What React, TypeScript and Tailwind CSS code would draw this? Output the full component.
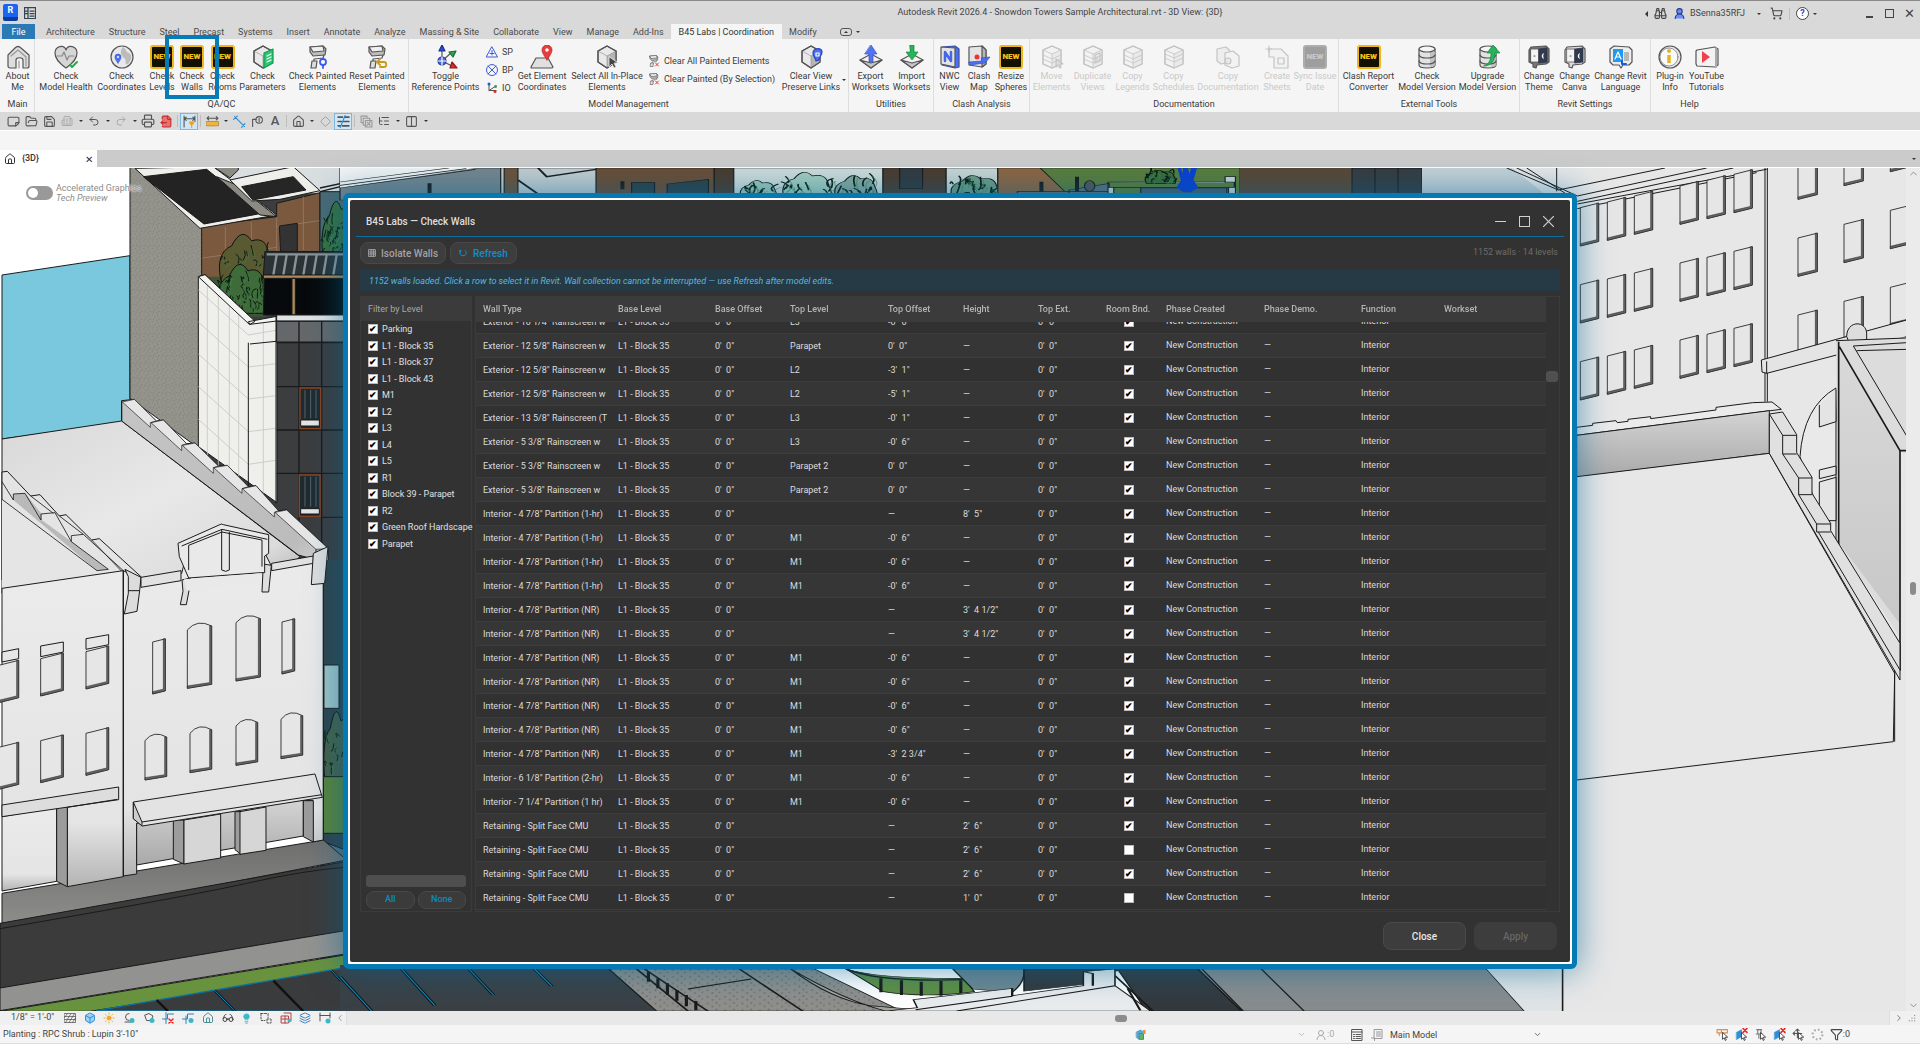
import { useEffect, useRef, useState } from "react";
import type { ReactNode } from "react";
import clsx from "clsx";
import {
  Binoculars,
  Box,
  Building2,
  ChevronDown,
  ChevronLeft,
  ChevronRight,
  ChevronUp,
  Columns2,
  Diamond,
  File,
  FileOutput,
  Filter,
  FolderOpen,
  Glasses,
  House,
  Layers,
  Lightbulb,
  ListTree,
  Printer,
  Redo2,
  Save,
  ShoppingCart,
  Sun,
  Undo2,
  UserRound,
} from "lucide-react";

/* ---------- data ---------- */

const tabs = [
  "Architecture",
  "Structure",
  "Steel",
  "Precast",
  "Systems",
  "Insert",
  "Annotate",
  "Analyze",
  "Massing & Site",
  "Collaborate",
  "View",
  "Manage",
  "Add-Ins",
  "B45 Labs | Coordination",
  "Modify",
];

const levels = [
  "Parking",
  "L1 - Block 35",
  "L1 - Block 37",
  "L1 - Block 43",
  "M1",
  "L2",
  "L3",
  "L4",
  "L5",
  "R1",
  "Block 39 - Parapet",
  "R2",
  "Green Roof Hardscape",
  "Parapet",
];

type Wall = [type: string, top: string, topOffset: string, height: string, bounding: boolean];

const NR = 'Interior - 4 7/8" Partition (NR)';
const HR = 'Interior - 4 7/8" Partition (1-hr)';
const CMU = "Retaining - Split Face CMU";

const walls: Wall[] = [
  ['Exterior - 10 1/4" Rainscreen w', "L3", "-0'  6\"", "—", true],
  ['Exterior - 12 5/8" Rainscreen w', "Parapet", "0'  0\"", "—", true],
  ['Exterior - 12 5/8" Rainscreen w', "L2", "-3'  1\"", "—", true],
  ['Exterior - 12 5/8" Rainscreen w', "L2", "-5'  1\"", "—", true],
  ['Exterior - 13 5/8" Rainscreen (T', "L3", "-0'  1\"", "—", true],
  ['Exterior - 5 3/8" Rainscreen w', "L3", "-0'  6\"", "—", true],
  ['Exterior - 5 3/8" Rainscreen w', "Parapet 2", "0'  0\"", "—", true],
  ['Exterior - 5 3/8" Rainscreen w', "Parapet 2", "0'  0\"", "—", true],
  [HR, "", "—", "8'  5\"", true],
  [HR, "M1", "-0'  6\"", "—", true],
  [HR, "M1", "-0'  6\"", "—", true],
  [HR, "M1", "-0'  6\"", "—", true],
  [NR, "", "—", "3'  4 1/2\"", true],
  [NR, "", "—", "3'  4 1/2\"", true],
  [NR, "M1", "-0'  6\"", "—", true],
  [NR, "M1", "-0'  6\"", "—", true],
  [NR, "M1", "-0'  6\"", "—", true],
  [NR, "M1", "-0'  6\"", "—", true],
  [NR, "M1", "-3'  2 3/4\"", "—", true],
  ['Interior - 6 1/8" Partition (2-hr)', "M1", "-0'  6\"", "—", true],
  ['Interior - 7 1/4" Partition (1 hr)', "M1", "-0'  6\"", "—", true],
  [CMU, "", "—", "2'  6\"", true],
  [CMU, "", "—", "2'  6\"", false],
  [CMU, "", "—", "2'  6\"", true],
  [CMU, "", "—", "1'  0\"", false],
];

const columns = [
  { name: "Wall Type", width: "w-[135px]" },
  { name: "Base Level", width: "w-[97px]" },
  { name: "Base Offset", width: "w-[75px]" },
  { name: "Top Level", width: "w-[98px]" },
  { name: "Top Offset", width: "w-[75px]" },
  { name: "Height", width: "w-[75px]" },
  { name: "Top Ext.", width: "w-[68px]" },
  { name: "Room Bnd.", width: "w-[60px]" },
  { name: "Phase Created", width: "w-[98px]" },
  { name: "Phase Demo.", width: "w-[97px]" },
  { name: "Function", width: "w-[83px]" },
  { name: "Workset", width: "" },
];

/* ---------- ribbon icons ---------- */

function Svg({ children, className = "size-6" }: { children: ReactNode; className?: string }) {
  return (
    <svg
      viewBox="0 0 24 24"
      className={className}
      fill="none"
      stroke="#555"
      strokeWidth="1.2"
      strokeLinejoin="round"
      strokeLinecap="round"
      aria-hidden="true"
    >
      {children}
    </svg>
  );
}

const Cube = () => (
  <>
    <path d="M12 1l9 5v11l-9 6-9-6V6z" fill="#e9e9e9" />
    <path d="M12 11l9-5v11l-9 6z" fill="#b5b5b5" stroke="none" />
    <path d="M3 6l9 5 9-5M12 11v12" stroke="#999" strokeWidth=".7" />
    <path d="M12 1l9 5v11l-9 6-9-6V6z" />
  </>
);

const Stack = ({ y = 0 }: { y?: number }) => (
  <>
    <path d="M12 1l9 4v14l-9 4-9-4V5z" fill="#ededed" />
    <path d="M12 9l9-4v14l-9 4z" fill="#cfcfcf" stroke="none" />
    <path d={`M3 5l9 4 9-4M3 ${10 + y}l9 4 9-4M3 ${14 + y}l9 4 9-4M12 9v14`} strokeWidth=".8" />
    <path d="M12 1l9 4v14l-9 4-9-4V5z" />
  </>
);

const Roller = () => (
  <>
    <path d="M4 2l13-1 3 3-1 6-12 1-3-4z" fill="#bdbdbd" />
    <path d="M4 2l13-1 1 5-11 1z" fill="#f0f0f0" />
    <path d="M18 10l-1 3-9 1v3" />
    <path d="M6 16h5l-1 7H5z" fill="#ddd" />
  </>
);

const NewBadge = ({ off }: { off?: boolean }) => (
  <span
    className={clsx(
      "flex size-6 items-center justify-center rounded-[3px] border-2 text-[8px] font-black leading-none",
      off ? "border-[#adadad] bg-[#9e9e9e] text-[#c8c8c8]" : "border-[#edb61e] bg-[#141000] text-[#f6c21c]",
    )}
  >
    NEW
  </span>
);

const Database = () => (
  <>
    <path d="M4 4v16c0 4 16 4 16 0V4" fill="#e2e2e2" />
    <path d="M15 7h4.700v14l-4.700 1.500z" fill="#c2c2c2" stroke="none" />
    <ellipse cx="12" cy="4" rx="8" ry="3" fill="#f5f5f5" />
    <path d="M4 10c1 4 15 4 16 0M4 16c1 4 15 4 16 0" />
  </>
);

const ThemeCard = ({ dark }: { dark?: boolean }) => (
  <>
    <path d="M4 2l15-1 3 3v13l-3 2-9 1-1 3-3-1v-3l-4-2V5z" fill={dark ? "#777" : "#ddd"} />
    <path d="M4 4h8v13H4z" fill="#f3f3f3" strokeWidth=".8" />
    <path d="M12 4l8-1v14l-8 1z" fill="#2f3b50" stroke="#334" strokeWidth=".8" />
    <path d="M17 8c-3 1-3 5 0 6-1-2-1-4 0-6z" fill="#fff" stroke="none" />
    <path d="M7 11h1" />
  </>
);

const icons: Record<string, ReactNode> = {
  about: (
    <Svg>
      <path d="M2 10L9 3c2-2 4-2 6 0l8 7v11c0 1-1 2-2 2h-4v-8c0-3-7-3-7 0v8H4c-1 0-2-1-2-2z" fill="#dedede" />
      <path d="M5 11l7-6 8 7v9M13 16v7" stroke="#999" />
    </Svg>
  ),
  health: (
    <Svg>
      <path d="M12 23C5 18 1 14 1 8c0-7 9-9 11-3 2-6 11-4 11 3 0 6-4 10-11 15z" fill="#d6d6d6" />
      <path d="M3 11h5l2-4 3 8 2-4h5" stroke="#888" />
      <path d="M16 20l2 2 5-5" stroke="#1fae4b" strokeWidth="2" />
    </Svg>
  ),
  globe: (
    <Svg>
      <circle cx="12" cy="12" r="11" fill="#e8e8e8" />
      <path d="M13 2c4 2 2 5 6 6 4 2 2 8-1 11-4 2-1-5-4-6-4-3-4-8-1-11z" fill="#bcbcbc" stroke="none" />
      <path d="M8 18c-3-4-3-5-3-6a3 3 0 016 0c0 1 0 2-3 6z" fill="#4d6ff2" stroke="#2f4fd0" strokeWidth=".6" />
      <circle cx="8" cy="12" r="1" fill="#fff" stroke="none" />
    </Svg>
  ),
  parameters: (
    <Svg>
      <Cube />
      <path d="M13 8l9-4v14l-9 5z" fill="#28c76f" stroke="#159a50" />
      <path d="M16 11l4-2M16 14l4-2M16 17l4-2" stroke="#fff" />
    </Svg>
  ),
  painted: (
    <Svg>
      <Roller />
      <circle cx="17" cy="17" r="3" fill="#fff" stroke="#3c5bea" strokeWidth="1.800" />
      <path d="M17 20v3" stroke="#3c5bea" strokeWidth="1.800" />
    </Svg>
  ),
  reset: (
    <Svg>
      <Roller />
      <path d="M13 17h6c3 0 3 5 0 5h-4M15 14l-3 3 3 3" stroke="#c99a1c" strokeWidth="1.800" />
    </Svg>
  ),
  toggle: (
    <Svg>
      <path d="M8 16V4M8 16l9-8M8 16l10 5" />
      <path d="M8 0l3 6H5z" fill="#2b4fd8" stroke="#1b2f90" />
      <path d="M22 6l-3 6-4-5z" fill="#2fa354" stroke="#17702f" />
      <path d="M18 17l5 6h-7z" fill="#d92c2c" stroke="#901a1a" />
      <circle cx="8" cy="16" r="4" fill="#4c68dd" stroke="#223b9c" />
      <path d="M8 12v8M4 16h8" stroke="#fff" />
    </Svg>
  ),
  element: (
    <Svg>
      <path d="M6 13h12l5 9c0 1-1 1-2 1H2c-1 0-1 0-1-1z" fill="#e0e0e0" />
      <path d="M17 15c-4-6-5-8-5-10a5 5 0 0110 0c0 2-1 4-5 10z" fill="#e93c3c" stroke="#b82222" strokeWidth=".7" />
      <circle cx="17" cy="5" r="1.800" fill="#fff" stroke="none" />
    </Svg>
  ),
  inplace: (
    <Svg>
      <Cube />
      <path d="M14 12v10l3-3 2 4 2-1-2-4h4z" fill="#444" stroke="#eee" strokeWidth=".8" />
    </Svg>
  ),
  clearview: (
    <Svg>
      <Cube />
      <path d="M17 16c0-3-3-4-3-8 0-5 9-6 9-1 0 4-3 4-3 8z" fill="#4d6ff2" stroke="#2443c4" />
      <path d="M17 8h3v3h-3z" stroke="#fff" />
    </Svg>
  ),
  export: (
    <Svg>
      <path d="M1 15l11-6 11 6-11 8z" fill="#f2f2f2" />
      <path d="M1 15l11 3 11-3-11 8z" fill="#c6c6c6" />
      <path d="M12 0l6 9h-4v8h-4V9H6z" fill="#5273f3" stroke="#3350c8" strokeWidth=".7" />
    </Svg>
  ),
  import: (
    <Svg>
      <path d="M1 15l11-6 11 6-11 8z" fill="#f2f2f2" />
      <path d="M1 15l11 3 11-3-11 8z" fill="#c6c6c6" />
      <path d="M10 0h4v7h4l-6 8-6-8h4z" fill="#26b35a" stroke="#178742" strokeWidth=".7" />
    </Svg>
  ),
  nwc: (
    <Svg>
      <path d="M4 2l13-1 4 3v18l-4 1-13-3z" fill="#4d6ff2" stroke="#3a4f9c" />
      <path d="M3 2l14 1v19L3 19z" fill="#e4e4e4" />
      <path d="M7 16V7l6 9V7" stroke="#4666e8" strokeWidth="2.500" />
    </Svg>
  ),
  clashmap: (
    <Svg>
      <path d="M2 2l13-1 4 4v14l-4 3L2 20z" fill="#e4e4e4" />
      <path d="M15 1l4 4v14l-4 3z" fill="#b5b5b5" />
      <path d="M2 17l13-1-1-3 9-1-5 6-15 2z" fill="#4d6ff2" stroke="#3350c8" strokeWidth=".7" />
      <circle cx="10" cy="12" r="2.500" fill="#e33" stroke="none" />
    </Svg>
  ),
  move: (
    <Svg>
      <Stack />
      <path d="M16 14v8l2-2 2 3 1-1-1-3h3z" fill="#aaa" />
    </Svg>
  ),
  duplicate: (
    <Svg>
      <Stack />
      <path d="M14 10l5-2v8l-5 2zM16 12v3" />
    </Svg>
  ),
  stack: (
    <Svg>
      <Stack />
    </Svg>
  ),
  stack2: (
    <Svg>
      <Stack y={-1} />
    </Svg>
  ),
  document: (
    <Svg>
      <path d="M1 4l9-2 4 4v11l-9 2-4-3z" fill="#ddd" />
      <path d="M9 8l8-2 6 5v10l-7 2-7-3z" fill="#eee" />
      <circle cx="12" cy="16" r="3" fill="#ccc" />
    </Svg>
  ),
  sheets: (
    <Svg>
      <path d="M4 4h12l7 7v12H9V12H4z" fill="#eee" />
      <path d="M4 1v6M1 4h6M13 13h6v6h-6z" />
    </Svg>
  ),
  database: (
    <Svg>
      <Database />
    </Svg>
  ),
  upgrade: (
    <Svg>
      <Database />
      <path d="M8 21c5-2 7-6 7-13h-4l6-8 7 8h-5c0 8-4 13-11 13z" fill="#26b35a" stroke="#178742" strokeWidth=".7" />
    </Svg>
  ),
  theme: (
    <Svg>
      <ThemeCard dark />
    </Svg>
  ),
  canvas: (
    <Svg>
      <ThemeCard />
    </Svg>
  ),
  language: (
    <Svg>
      <path d="M5 1l15 1 3 3v12l-3 3h-6l-2 3-2-3H4l-3-3V4z" fill="#ececec" />
      <path d="M4 4h10v13H4z" fill="#1e9bf0" stroke="none" />
      <path d="M15 7h5v9h-5z" fill="#b8b8b8" stroke="none" />
      <path d="M6 14l3-7 3 7M7 12h4" stroke="#fff" />
      <path d="M13 16v3h4" stroke="#1e5bd0" strokeWidth="2" />
    </Svg>
  ),
  info: (
    <Svg>
      <circle cx="12" cy="12" r="11" fill="#e8e8e8" />
      <circle cx="11" cy="12" r="9" fill="#fafafa" strokeWidth=".6" />
      <path d="M11 10v8" stroke="#e6b325" strokeWidth="3.500" strokeLinecap="butt" />
      <circle cx="11" cy="6" r="2" fill="#e6b325" stroke="none" />
    </Svg>
  ),
  youtube: (
    <Svg>
      <path d="M2 5l18-3 3 2v16l-3 2-18-1-1-2V6z" fill="#f2f2f2" />
      <path d="M21 3v19" stroke="#aaa" strokeWidth="2" />
      <path d="M7 6l8 6-8 6z" fill="#f2404a" stroke="none" />
    </Svg>
  ),
  new: <NewBadge />,
  newOff: <NewBadge off />,
};

/* ---------- ribbon ---------- */

type ToolProps = { icon: string; lines: [string, string]; width: string; off?: boolean; arrow?: boolean };

function Tool({ icon, lines, width, off, arrow }: ToolProps) {
  return (
    <button
      disabled={off}
      className={clsx(
        "relative flex h-full shrink-0 flex-col items-center whitespace-nowrap pt-[6px] text-[9px] leading-[11px]",
        width,
        off ? "text-[#c9c9c9]" : "text-[#3a3a3a]",
      )}
    >
      <span className={clsx("mb-[2px]", off && icon !== "newOff" && "opacity-30")}>{icons[icon]}</span>
      <span>{lines[0]}</span>
      <span>{lines[1]}</span>
      {arrow && (
        <span className="absolute -right-[3px] bottom-4 border-x-2 border-t-2 border-x-transparent border-t-[#333]" />
      )}
    </button>
  );
}

function Panel({ title, width, children }: { title: string; width: string; children: ReactNode }) {
  return (
    <section className={clsx("flex shrink-0 flex-col border-r border-[#dedede] last:border-r-0", width)}>
      <div className="flex h-[58px] px-px">{children}</div>
      <h2 className="text-center text-[9px] leading-[14px] text-[#3a3a3a]">{title}</h2>
    </section>
  );
}

function Ribbon() {
  return (
    <div className="flex h-[73px] bg-[#f5f5f5] pl-px">
      <Panel title="Main" width="w-[34px]">
        <Tool icon="about" lines={["About", "Me"]} width="w-[31px]" />
      </Panel>
      <Panel title="QA/QC" width="w-[374px]">
        <Tool icon="health" lines={["Check", "Model Health"]} width="w-[60px]" />
        <Tool icon="globe" lines={["Check", "Coordinates"]} width="w-[51px]" />
        <Tool icon="new" lines={["Check", "Levels"]} width="w-[30px]" />
        <Tool icon="new" lines={["Check", "Walls"]} width="w-[30px]" />
        <Tool icon="new" lines={["Check", "Rooms"]} width="w-[31px]" />
        <Tool icon="parameters" lines={["Check", "Parameters"]} width="w-[49px]" />
        <Tool icon="painted" lines={["Check Painted", "Elements"]} width="w-[61px]" />
        <Tool icon="reset" lines={["Reset Painted", "Elements"]} width="w-[58px]" />
      </Panel>
      <Panel title="Model Management" width="w-[440px]">
        <Tool icon="toggle" lines={["Toggle", "Reference Points"]} width="w-[71px]" />
        <div className="flex w-[34px] shrink-0 flex-col gap-[6px] pl-[5px] pt-[7px] text-[9px] leading-[12px] text-[#3a3a3a]">
          <button className="flex items-center gap-1">
            <Svg className="size-3">
              <path d="M12 2l11 20H1zM12 9v9M8 15h8" stroke="#3c5bd8" strokeWidth="2" />
            </Svg>
            SP
          </button>
          <button className="flex items-center gap-1">
            <Svg className="size-3">
              <path d="M4 4l16 16M20 4L4 20M12 1a11 11 0 100 22 11 11 0 000-22" stroke="#3c5bd8" strokeWidth="2" />
            </Svg>
            BP
          </button>
          <button className="flex items-center gap-1">
            <Svg className="size-3">
              <path d="M6 3v14h14M6 17L20 8" strokeWidth="2" />
              <circle cx="6" cy="4" r="3" fill="#2b4fd8" stroke="none" />
              <circle cx="19" cy="9" r="3" fill="#2fa354" stroke="none" />
              <circle cx="18" cy="19" r="3" fill="#d92c2c" stroke="none" />
            </Svg>
            IO
          </button>
        </div>
        <Tool icon="element" lines={["Get Element", "Coordinates"]} width="w-[54px]" />
        <Tool icon="inplace" lines={["Select All In-Place", "Elements"]} width="w-[76px]" />
        <div className="flex w-[134px] shrink-0 flex-col gap-[6px] whitespace-nowrap pl-[3px] pt-[16px] text-[9px] leading-[12px] text-[#3a3a3a]">
          {["Clear All Painted Elements", "Clear Painted (By Selection)"].map((label) => (
            <button key={label} className="flex items-center gap-1">
              <Svg className="size-3">
                <Roller />
                <path d="M15 16l6 6M21 16l-6 6" stroke="#e33" strokeWidth="2" />
              </Svg>
              {label}
            </button>
          ))}
        </div>
        <Tool icon="clearview" lines={["Clear View", "Preserve Links"]} width="w-[64px]" arrow />
      </Panel>
      <Panel title="Utilities" width="w-[85px]">
        <Tool icon="export" lines={["Export", "Worksets"]} width="w-[41px]" />
        <Tool icon="import" lines={["Import", "Worksets"]} width="w-[41px]" />
      </Panel>
      <Panel title="Clash Analysis" width="w-[96px]">
        <Tool icon="nwc" lines={["NWC", "View"]} width="w-[29px]" />
        <Tool icon="clashmap" lines={["Clash", "Map"]} width="w-[30px]" />
        <Tool icon="new" lines={["Resize", "Spheres"]} width="w-[34px]" />
      </Panel>
      <Panel title="Documentation" width="w-[309px]">
        <Tool icon="move" lines={["Move", "Elements"]} width="w-[41px]" off />
        <Tool icon="duplicate" lines={["Duplicate", "Views"]} width="w-[41px]" off />
        <Tool icon="stack" lines={["Copy", "Legends"]} width="w-[39px]" off />
        <Tool icon="stack2" lines={["Copy", "Schedules"]} width="w-[43px]" off />
        <Tool icon="document" lines={["Copy", "Documentation"]} width="w-[66px]" off />
        <Tool icon="sheets" lines={["Create", "Sheets"]} width="w-[32px]" off />
        <Tool icon="newOff" lines={["Sync Issue", "Date"]} width="w-[44px]" off />
      </Panel>
      <Panel title="External Tools" width="w-[181px]">
        <Tool icon="new" lines={["Clash Report", "Converter"]} width="w-[57px]" />
        <Tool icon="database" lines={["Check", "Model Version"]} width="w-[60px]" />
        <Tool icon="upgrade" lines={["Upgrade", "Model Version"]} width="w-[61px]" />
      </Panel>
      <Panel title="Revit Settings" width="w-[131px]">
        <Tool icon="theme" lines={["Change", "Theme"]} width="w-[36px]" />
        <Tool icon="canvas" lines={["Change", "Canva"]} width="w-[35px]" />
        <Tool icon="language" lines={["Change Revit", "Language"]} width="w-[57px]" />
      </Panel>
      <Panel title="Help" width="w-[77px]">
        <Tool icon="info" lines={["Plug-in", "Info"]} width="w-[36px]" />
        <Tool icon="youtube" lines={["YouTube", "Tutorials"]} width="w-[37px]" />
      </Panel>
    </div>
  );
}

/* ---------- window chrome ---------- */

const Caret = ({ className = "w-[9px]" }: { className?: string }) => (
  <span className={clsx("flex shrink-0 items-center justify-center", className)}>
    <span className="border-x-2 border-t-2 border-x-transparent border-t-[#333]" />
  </span>
);

function TitleBar() {
  return (
    <header className="grid h-[23px] grid-cols-[1fr_auto_1fr] items-center bg-[#d9d9d9] text-[9px] text-[#444]">
      <div className="flex items-center gap-[6px] pl-[3px]">
        <span className="flex h-[17px] w-[15px] justify-center rounded-xs border-b-4 border-[#0a3c9c] bg-[#1a64f0] pt-px text-[9px] font-bold leading-[11px] text-white">
          R
        </span>
        <Svg className="size-3">
          <path d="M1 1h22v22H1zM8 1v22M12 8h8M12 13h8M12 18h8M3 8h3M3 13h3" stroke="#345" strokeWidth="2.500" />
        </Svg>
      </div>
      <h1 className="pl-[200px]">Autodesk Revit 2026.4 - Snowdon Towers Sample Architectural.rvt - 3D View: {"{3D}"}</h1>
      <div className="flex items-center justify-end pt-[2px]">
        <span className="mr-[6px] border-y-3 border-r-3 border-y-transparent border-r-[#333]" />
        <Binoculars size={13} className="mr-[6px]" />
        <UserRound size={13} fill="#6b8cff" className="mr-1 text-[#243a7a]" />
        <span>BSenna35RFJ</span>
        <Caret className="ml-[9px] mr-[6px] w-[10px]" />
        <ShoppingCart size={13} className="mr-[6px]" />
        <span className="mr-[6px] h-3 w-px bg-[#c0c0c0]" />
        <button
          aria-label="Help"
          className="size-[13px] rounded-full border border-[#444] bg-white text-[9px] font-bold leading-[11px] text-[#2450c8]"
        >
          ?
        </button>
        <Caret className="mr-[45px] w-[12px]" />
        <button aria-label="Minimize" className="mr-3 mt-[6px] h-[2px] w-[7px] bg-[#444]" />
        <button aria-label="Restore" className="mr-[10px] size-[9px] border border-[#444]" />
        <button aria-label="Close window" className="mr-[5px] text-[13px] leading-[10px]">
          ✕
        </button>
      </div>
    </header>
  );
}

function Tabs() {
  return (
    <nav className="flex h-[15px] bg-[#d9d9d9] pl-[2px] text-[9px] leading-[16px] text-[#4a4a4a]">
      <button className="mr-[4px] w-[33px] bg-[#2a7ab5] text-white">File</button>
      <div className="flex">
        {tabs.map((tab) => (
          <button
            key={tab}
            className={clsx(
              "whitespace-nowrap",
              tab.startsWith("B45") ? "bg-[#f5f5f5] px-2 text-[#333]" : "px-[7px]",
            )}
          >
            {tab}
          </button>
        ))}
      </div>
      <button aria-label="Collapse ribbon" className="ml-4 flex items-center gap-1">
        <span className="flex h-2 w-3 items-center justify-center rounded-[3px] border border-[#555]">
          <span className="border-x-2 border-b-2 border-x-transparent border-b-[#333]" />
        </span>
        <Caret className="w-1" />
      </button>
    </nav>
  );
}

function QuickAccess() {
  const slot = "flex w-[18px] shrink-0 items-center justify-center";
  const hot = "flex h-[17px] w-[18px] shrink-0 items-center justify-center border border-[#7cb8dc] bg-[#cfe6f4]";
  const sep = <span className="mx-[2px] h-3 w-px shrink-0 bg-[#bdbdbd]" />;
  return (
    <div className="flex h-[18px] items-center bg-[#d9d9d9] pl-1 text-[#555]">
      <button aria-label="New" className={slot}>
        <File size={13} className="rotate-90" />
      </button>
      <button aria-label="Open" className={slot}>
        <FolderOpen size={13} />
      </button>
      <button aria-label="Save" className={slot}>
        <Save size={13} />
      </button>
      <button aria-label="Sync" className={slot}>
        <Building2 size={12} className="text-[#aaa]" />
      </button>
      <Caret />
      <button aria-label="Undo" className={slot}>
        <Undo2 size={12} />
      </button>
      <Caret />
      <button aria-label="Redo" className={slot}>
        <Redo2 size={12} className="text-[#aaa]" />
      </button>
      <Caret />
      <button aria-label="Print" className={slot}>
        <Printer size={14} />
      </button>
      <button aria-label="Export PDF" className={slot}>
        <FileOutput size={13} fill="#e87070" className="text-[#c03030]" />
      </button>
      {sep}
      <button aria-label="Dimension" className={hot}>
        <Svg className="size-[13px]">
          <path d="M2 2v20M22 2v10M2 7h20M6 4L2 7l4 3M18 4l4 3-4 3" strokeWidth="2" />
          <path d="M12 13h8l-2 4h-4zM16 17v6" stroke="#f0a020" fill="#f0a020" strokeWidth="2" />
        </Svg>
      </button>
      {sep}
      <button aria-label="Measure" className={slot}>
        <Svg className="size-[13px]">
          <path d="M2 6h20M5 3L2 6l3 3M19 3l3 3-3 3" strokeWidth="2" />
          <path d="M1 12h22v8H1z" fill="#f2b53c" stroke="#a87510" />
        </Svg>
      </button>
      <Caret />
      <button aria-label="Aligned dimension" className={slot}>
        <Svg className="size-[13px]">
          <path d="M3 3l18 18M1 8l7-6M16 23l6-7" stroke="#2c8ad0" strokeWidth="2" />
        </Svg>
      </button>
      <button aria-label="Tag" className={slot}>
        <Svg className="size-[13px]">
          <path d="M3 21V8h7M15 3a6 6 0 100 12 6 6 0 000-12M15 6v6" strokeWidth="2" />
        </Svg>
      </button>
      <button aria-label="Text" className={clsx(slot, "text-[13px] font-medium leading-[18px]")}>
        A
      </button>
      {sep}
      <button aria-label="3D view" className={slot}>
        <House size={13} />
      </button>
      <Caret />
      <button aria-label="Section" className={slot}>
        <Diamond size={11} className="text-[#999]" />
      </button>
      <button aria-label="Thin lines" className={hot}>
        <Svg className="size-[13px]">
          <path d="M2 4h8M14 4h8M2 12h6M12 12h10M2 20h4M10 20h12" strokeWidth="3" />
          <path d="M15 1L6 23" stroke="#2c8ad0" strokeWidth="2" />
        </Svg>
      </button>
      {sep}
      <button aria-label="Close inactive" className={slot}>
        <Svg className="size-[13px]">
          <path d="M2 2h11v4M2 2v12h4M6 6h12v6M6 6v13h6M10 10h12v12H10zM13 13l6 6M19 13l-6 6" stroke="#999" strokeWidth="2" />
        </Svg>
      </button>
      <button aria-label="Switch windows" className={slot}>
        <ListTree size={12} />
      </button>
      <Caret />
      <button aria-label="User interface" className={slot}>
        <Columns2 size={13} />
      </button>
      <Caret className="w-3" />
    </div>
  );
}

/* ---------- model scene ---------- */

// tiny deterministic generator so foliage is the same on each render
function rng(seed: number) {
  let s = seed;
  return () => {
    s = (s * 16807) % 2147483647;
    return s / 2147483647;
  };
}

type FoliageProps = { x: number; y: number; w: number; h: number; fill: string; seed: number; count?: number };

function Foliage({ x, y, w, h, fill, seed, count = 55 }: FoliageProps) {
  const rand = rng(seed);
  const strokes = Array.from({ length: count }, () => {
    const px = x + rand() * w;
    const py = y + h * 0.35 + rand() * h * 0.65;
    return `M${px} ${py}q${rand() * 24 - 12} ${-rand() * 26} ${rand() * 20 - 10} ${-rand() * 34}`;
  }).join("");
  return (
    <g>
      <path
        d={`M${x} ${y + h}q${-w * 0.15} ${-h * 0.6} ${w * 0.2} ${-h * 0.75}q${w * 0.2} ${-h * 0.4} ${w * 0.4} ${-h * 0.1}q${w * 0.3} ${-h * 0.1} ${w * 0.35} ${h * 0.3}q${w * 0.1} ${h * 0.3} ${w * 0.05} ${h * 0.55}z`}
        fill={fill}
        stroke="#111"
      />
      <path d={strokes} fill="none" stroke="#0b1a10" strokeWidth="3" />
      <path d={strokes} fill="none" stroke="#3c8a50" strokeWidth="2" transform="translate(5 9)" opacity=".6" />
    </g>
  );
}

function Win({ x, y, w = 55, h = 115, arch }: { x: number; y: number; w?: number; h?: number; arch?: boolean }) {
  const rise = arch ? w / 6 : w / 4;
  const head = arch ? `Q${x + w * 0.4} ${y - rise - 22} ${x + w} ${y - rise}` : `L${x + w} ${y - rise}`;
  return (
    <g strokeWidth="2.5">
      <path d={`M${x} ${y}${head}V${y + h - rise}L${x} ${y + h}Z`} fill="#e6e6e6" />
      <path
        d={`M${x + w - 6} ${y - rise}h6V${y + h - rise}L${x} ${y + h}v-7L${x + w - 6} ${y + h - rise - 5}z`}
        fill="#666"
        strokeWidth="1.5"
      />
    </g>
  );
}

function Scene() {
  return (
    <svg
      viewBox="0 168 1906 843"
      preserveAspectRatio="xMidYMid slice"
      className="absolute inset-0 size-full"
      stroke="#1a1a1a"
      strokeWidth="3"
      aria-hidden="true"
    >
      <defs>
        <pattern id="stucco" width="26" height="22" patternUnits="userSpaceOnUse">
          <rect width="26" height="22" fill="#94948c" stroke="none" />
          <path d="M3 4l3 2M14 3l2-2M21 9l3 1M8 13l2 3M17 17l3-1M1 19h3" stroke="#66665f" strokeWidth="2" />
        </pattern>
        <pattern id="paving" width="22" height="20" patternUnits="userSpaceOnUse">
          <rect width="22" height="20" fill="#8f8f8c" stroke="none" />
          <path d="M3 4v3M14 2v3M9 13v3M18 11v2" stroke="#555" strokeWidth="2" />
        </pattern>
        <linearGradient id="roof" x1="0" y1="0" x2="1" y2="1">
          <stop offset="0" stopColor="#d8d8d8" />
          <stop offset=".5" stopColor="#e8e8e8" />
          <stop offset=".85" stopColor="#dcdcdc" />
          <stop offset="1" stopColor="#b4b4b4" />
        </linearGradient>
        <linearGradient id="coping" x1="0" y1="0" x2="1" y2="1">
          <stop offset="0" stopColor="#c4c4c4" />
          <stop offset=".8" stopColor="#bcbcbc" />
          <stop offset="1" stopColor="#e0e4e6" />
        </linearGradient>
        <linearGradient id="shade" x1="0" y1="0" x2="0" y2="1">
          <stop offset="0" stopColor="#d4d4d4" />
          <stop offset="1" stopColor="#a9a9a9" />
        </linearGradient>
        <linearGradient id="facade" x1="0" y1="0" x2="0" y2="1">
          <stop offset="0" stopColor="#ebebeb" />
          <stop offset=".8" stopColor="#e4e4e4" />
          <stop offset="1" stopColor="#b4b4b4" />
        </linearGradient>
        <linearGradient id="walk" x1="0" y1="0" x2="0" y2="1">
          <stop offset="0" stopColor="#6e6e6e" />
          <stop offset="1" stopColor="#8e8e8b" />
        </linearGradient>
      </defs>
      <rect y="168" width="1906" height="843" fill="#fff" stroke="none" />
      <rect x="1500" y="168" width="406" height="843" fill="#e7e7e7" stroke="none" />

      {/* upper left: tower, plants and long roof */}
      <g transform="translate(0 160) scale(.33333)">
        <path d="M6 345L390 287V785L6 837z" fill="#7ac8dd" />
        <path d="M590 20h500v1400H590z" fill="#3b3d3f" stroke="none" />
        <path d="M640 20h450v80H700z" fill="#d9dee0" stroke="none" />
        <path d="M595 200l235-30 0-40 130-32v260H595z" fill="#7b593e" />
        <path
          d="M676 200v110M754 185v120M830 170v110M910 110v160M595 296l235-34M830 200l130-18"
          stroke="#9b8672"
          strokeWidth="2"
        />
        <path d="M960 95h130v210H960z" fill="#4b6a73" />
        <path d="M600 350h200v120H740z" fill="#3d5535" stroke="none" />
        <Foliage x={665} y={220} w={150} h={150} fill="#5a5a32" seed={7} count={20} />
        <Foliage x={660} y={310} w={140} h={150} fill="#3f6a3a" seed={17} />
        <Foliage x={970} y={120} w={90} h={190} fill="#39703f" seed={19} />
        <path d="M838 198l54-8v90h-50z" fill="#333" />
        <path d="M390 22h60L605 205V860H590L390 715z" fill="url(#stucco)" />
        <path d="M640 20L830 165 600 205 405 25z" fill="#eeeeea" />
        <path d="M430 50L620 28 785 160 612 192z" fill="#232323" />
        <path d="M640 20l50 34 25-24v-10zM650 50l130 115 50 5-120-95z" fill="#8b8b83" />
        <path d="M690 60l190-40 80 72-120 26-85 5z" fill="#eeeeea" />
        <path d="M725 80l155-30 38 40-160 30z" fill="#262626" />
        <path d="M960 95l130-32M960 84l130-28" strokeWidth="4" />
        <path d="M795 275h300v190H790z" fill="#070a0c" />
        <path d="M795 275h300v70H790z" fill="#2b3336" />
        <path
          d="M800 283h290M830 285l-10 60M860 285l-10 60M890 285l-10 60M920 285l-10 60M950 285l-10 60M980 285l-10 60M1010 285l-10 60"
          stroke="#8a9497"
          strokeWidth="7"
        />
        <path d="M790 345h300v10H790zM876 355h10v110h-10z" fill="#a98a5c" />
        <path d="M595 350l20-6 150 140 66-16v560L595 860z" fill="#eff0ec" />
        <path
          d="M622 372v520M655 402v520M688 432v500M716 455v500M790 480v530M595 390l150 135 82-14M595 486l150 135 82-10M595 582l150 135 82-10M595 680l150 135 82-10M595 778l150 135 82-12"
          fill="none"
          stroke="#c5c6c1"
          strokeWidth="2.500"
        />
        <path d="M595 350l20-6 150 140-16 10zM745 485l85-16v14l-80 10zM745 548v430M750 552l78-8M828 470v560" fill="#f4f4f2" />
        <path d="M830 465h260v18H830z" fill="#dfe3e4" />
        <path d="M830 484h260v62H830z" fill="#64686a" />
        <path
          d="M897 484v720M965 484v720M830 548h260M830 680h260M830 810h260M830 940h260M965 1072h125M985 1204h100"
          strokeWidth="4"
        />
        <path d="M900 684h62v122h-62zM898 945h62v124h-62z" fill="#1f2b31" stroke="#8a4323" strokeWidth="4" />
        <path d="M902 780h56v18h-56zM902 1046h56v16h-56z" fill="#e5e5e5" />
        <path d="M915 690v85M932 690v85M948 690v85M915 950v90M932 950v90M948 950v90" stroke="#56646a" />

        <path d="M6 837L365 783 900 1190 820 1260H6z" fill="url(#roof)" />
        <path
          d="M365 722L403 718 469 783 490 780 560 851 585 849 655 918 682 916 745 980 768 977 835 1052 860 1050 985 1166V1215L970 1290H948V1200L895 1185 365 783z"
          fill="url(#coping)"
        />
        <path
          d="M403 718L469 783 451 788V802L367 726zM490 780L560 851 545 856V872L453 788zM585 849L655 918 640 923V940L547 856zM682 916L745 980 726 986V1000L641 923zM768 977L835 1052 823 1057V1071L727 986zM860 1050L985 1166 948 1168 825 1057z"
          fill="#e6e6e6"
          strokeWidth="2"
        />
        <path d="M365 722v61M948 1168v110M948 1210h37" fill="none" />
        <path
          d="M6 936L22 934 92 1008 120 1004 178 1068 198 1064 275 1140 298 1136 425 1252V1300H6z"
          fill="#e4e4e4"
        />
        <path d="M6 1262V1018L291 1232 325 1228 372 1232V1300H6z" fill="#e5e5e5" stroke="none" />
        <path d="M40 1020V1002L75 1000 125 1062V1080L215 1145 325 1228 291 1232z" fill="#b9b9b9" stroke="none" />
        <path
          d="M6 965L40 1020V1002L75 1000 123 1080V1062L165 1058 214 1145V1127L250 1123 370 1232M6 1018L291 1232 325 1228 214 1145M92 1008L160 1060M178 1068L250 1123M275 1140L390 1260"
          fill="none"
          strokeWidth="2.500"
        />
      </g>

      {/* lower left: street facades */}
      <g transform="translate(0 560) scale(.33333)">
        <path d="M960 0h90v1352H960z" fill="#30444d" stroke="none" />
        <path d="M972 315h45v130h-45z" fill="#9fc4c6" />
        <Foliage x={975} y={450} w={80} h={220} fill="#476048" seed={31} count={12} />
        <path d="M970 650h80v170h-80z" fill="#59833c" />
        <path d="M970 845l80 30v120h-80z" fill="#4f7280" />
        <path d="M6 1000L970 840l70 60L6 1100z" fill="url(#walk)" />
        <path d="M0 1090L1035 905v210L0 1290z" fill="#3b3b3b" />
        <path d="M0 1106q560-96 740-136t295-48" fill="none" />
        <path d="M0 1284L1035 1112v70L0 1352z" fill="#929290" />
        <path d="M0 1354L1040 1184v50L270 1354z" fill="#69923f" />
        <path d="M290 1352L1040 1222v132z" fill="#393b3c" stroke="#0e6f9c" strokeWidth="4" />
        <path d="M470 1320l34 34M645 1292l60 62M820 1262l90 92M995 1232l110 122" stroke="#111" strokeWidth="7" />
        <path d="M645 1292l60 62M995 1232l110 122" stroke="#1790c8" strokeWidth="3" />

        <path d="M6 85L370 32V950l-168 30V740L6 770z" fill="url(#facade)" />
        <path d="M6 770l164-28v222L6 993z" fill="url(#facade)" />
        <path d="M170 742h32v238l-32-16z" fill="#9c9c9c" />
        <path
          d="M370 32L425 62 545 40 560 -20 670 -60 790 -30 815 20 935 -5 970 -10V840L938 846V720L410 790V942L370 948z"
          fill="url(#facade)"
        />
        <path d="M410 790l500-70v108L410 915z" fill="url(#shade)" />
        <path d="M520 780h32v132l-32-14zM705 755h18v128l-18-14zM910 722h30v124l-30-16z" fill="#9c9c9c" />
        <path d="M552 780l110-18v132l-110 18zM720 755l78-14v130l-78 12z" fill="#d6d6d6" />
        <path d="M400 726L945 642l22 70-540 86-27-22z" fill="#e3e3e3" />
        <path d="M400 726l26 60v12l-26-22zM426 786l540-82" fill="#ccc" />
        <path d="M6 735l350-54v38L6 770zM202 742l150-24" fill="#ddd" />
        <path d="M375 28L423 52 419 92 411 154 373 162 385 100 385 50zM385 92h34" fill="#dcdcdc" />
        <path d="M423 52l120-20v30l-120 20zM815 10l125-22v22l-125 22z" fill="#e2e2e2" />
        <path d="M546 60l25-6-4 38-8 42h-18l8-40zM790 12l24 4-8 80h-20zM940-20l44-20-10 110-40 4z" fill="#ddd" />
        <path
          d="M538 -10L534 -50 664 -108 670 -106 806 -76V-20L794 -12V38H782L566 54z"
          fill="#e9e9e9"
        />
        <path d="M545 -42L666 -92 802 -62M566 30V-44L666 -84 786 -60V20M665 -90V30L677 34 688 30V-84" fill="none" />
        <path d="M552 58L782 40V70L560 92z" fill="#e9e9e9" stroke="none" />
        <path d="M370 32v916M970 70v770" fill="none" />

        <path d="M258 236l68-12v30l-68 14zM122 258l68-12v30l-68 14zM6 276l50-10v30l-50 10z" fill="#e6e6e6" />
        <Win x={258} y={275} w={68} h={112} />
        <Win x={122} y={296} w={68} h={112} />
        <Win x={-12} y={318} w={68} h={112} />
        <Win x={258} y={520} w={68} h={126} />
        <Win x={122} y={542} w={68} h={126} />
        <Win x={-12} y={564} w={68} h={126} />
        <Win x={458} y={246} w={38} h={156} />
        <Win x={846} y={186} w={38} h={156} />
        <Win x={562} y={210} w={73} h={175} arch />
        <Win x={708} y={188} w={73} h={175} arch />
        <Win x={435} y={542} w={65} h={118} arch />
        <Win x={570} y={520} w={65} h={118} arch />
        <Win x={708} y={498} w={65} h={118} arch />
        <Win x={843} y={478} w={65} h={118} arch />
      </g>

      {/* strip above the dialog */}
      <g transform="translate(340 160) scale(.574 .33333)" strokeWidth="2">
        <path d="M0 24h280v96H0z" fill="#75858c" />
        <path d="M0 24h236L0 84z" fill="#f1f3f4" stroke="none" />
        <path d="M0 66L190 24M0 84L236 28M0 76L220 26" fill="none" />
        <path d="M280 24h170v96H280z" fill="#c3cccf" />
        <path d="M286 24h24v96h-24z" fill="#6e5238" />
        <path d="M310 60l50 60M345 24l15 26 86-22" fill="none" strokeWidth="4" />
        <path d="M446 24h206v96H446z" fill="#6b4c33" />
        <path d="M508 68h40v52h-40zM570 72l72-14v62h-72z" fill="#2f4045" />
        <path d="M652 24h34v96h-34z" fill="#4a3a2c" />
        <path d="M686 24h260v96H686z" fill="#cfdcda" />
        <Foliage x={700} y={60} w={60} h={60} fill="#9fc9b8" seed={5} count={12} />
        <Foliage x={775} y={35} w={80} h={85} fill="#a5cdbd" seed={11} count={14} />
        <Foliage x={865} y={45} w={70} h={75} fill="#86a99c" seed={13} count={14} />
        <path d="M946 24h110v96H946z" fill="#4c3a2d" />
        <path d="M975 24h40v62h-40z" fill="#33383c" />
        <path d="M1056 24h90v96h-90z" fill="#c9d5d3" />
        <Foliage x={1068} y={45} w={80} h={75} fill="#6f9c84" seed={23} count={18} />
        <path d="M1146 24h110l20 96h-130z" fill="#8d6440" />
        <path d="M1220 24h348v96h-290z" fill="#5b7c3a" />
        <path d="M1270 90l70-20v50h-70zM1180 94h160v26h-160z" fill="#5d7079" />
        <path d="M1338 66h220v16h-220zM1338 66v54h10V82h200v38h12V50h-18v18" fill="#c9d4d8" />
        <path d="M1395 84h150v36h-150z" fill="#48606c" />
        <path d="M1284 50v45M1222 65v30M156 70v45M492 64v24" strokeWidth="7" />
        <ellipse cx="1306" cy="78" rx="9" ry="16" fill="#555" />
        <Foliage x={1405} y={30} w={50} h={40} fill="#3d6b35" seed={41} count={10} />
        <path
          d="M1460 24l6 38-8 20 12 14h12l12-14-8-22 6-36-8 0-4 24-4-24-6 0-2 24-4-24z"
          fill="#0a3fd0"
          stroke="#0a3fd0"
          strokeWidth="2"
        />
      </g>
      <g>
        <path d="M1240 168h125l30 32h-155z" fill="#5a4634" stroke="none" />
        <path d="M1352 168h70v32h-70zM1375 168v32M1398 168v32" fill="#363b3f" strokeWidth="1" />
        <path d="M1422 168h90l50 40h-140z" fill="#c6d1d6" stroke="none" />
      </g>

      {/* right side buildings */}
      <g transform="translate(1560 160) scale(.33333)">
        <path d="M-160 24L-5 90 315 24M-130 24L52 108 440 24M-100 24L52 124 520 24M52 132L620 28M52 146L590 38M-10 24v70" fill="none" />
        <path d="M615 24V725M622 24V725" />
        {[0, 1, 2].map((r) => (
          <g key={r}>
            <Win x={61} y={143 + r * 231} />
            <Win x={142} y={126 + r * 231} />
            <Win x={223} y={108 + r * 231} />
            <Win x={360} y={78 + r * 231} />
            <Win x={441} y={61 + r * 231} />
            <Win x={522} y={43 + r * 231} />
            <Win x={714} y={3 + r * 231} w={58} />
            <Win x={852} y={-38 + r * 231} w={58} />
            <Win x={991} y={-80 + r * 231} w={58} />
          </g>
        ))}
        <path d="M604 600L1040 480v50L620 640l-14-4zM620 604v36" fill="#e4e4e4" />
        <path d="M860 530c0-50 60-50 60-8v30h-50z" fill="#ddd" />
        <path d="M720 890q10-150 108-206v480L760 1010z" fill="#e9e9e9" />
        <path d="M778 735v66l50-16V690M778 930l50-12v26l-50 12zM778 966l50-14v130h-50z" fill="#e4e4e4" />
        <path d="M828 542l212-10v350l-20-8v560L836 1150z" fill="#dcdcdc" stroke="none" />
        <path d="M838 560l182 312v520L838 1150z" fill="url(#shade)" opacity=".4" stroke="none" />
        <path d="M828 542L1040 534M880 558L1040 548M880 558L1040 828M890 572L1040 568" fill="none" />
        <path d="M838 560l182 312h20M836 545v610M1020 872v660" fill="none" strokeWidth="5" />
        <path
          d="M50 802L98 796V790L168 782 172 788 204 784V778L272 770V776L468 750V742L578 728 636 726 664 748 50 826z"
          fill="#ebebeb"
        />
        <path d="M50 826L628 752v128L50 952z" fill="url(#shade)" />
        <path d="M50 950L628 880 1004 1540 1000 1745 50 1860z" fill="#e7e7e7" />
        <path
          d="M628 762L668 756 710 824V878L756 952V1000L812 1090V1112L1020 1450V1560L628 880z"
          fill="#e0e0e0"
        />
        <path
          d="M628 762L668 826H710M668 826V882H710M668 882L716 954H756M716 954V1004H756M716 1004L770 1092H812M770 1092V1116H812M775 1116L1020 1530"
          fill="none"
        />
        <path d="M1004 1530v215" />
      </g>

      {/* ground below the dialog */}
      <g transform="translate(340 955) scale(.7908 .33333)" strokeWidth="2">
        <path d="M0 30h340l60 140H0z" fill="#3a4146" stroke="none" />
        <path d="M0 65l40 103M78 42l42 110M163 42l31 78M246 42l22 52" stroke="#0c1418" strokeWidth="5" />
        <path d="M0 65l40 103M78 42l42 110M163 42l31 78M246 42l22 52" stroke="#1583b4" strokeWidth="2" />
        <path d="M340 42h260l110 126H400z" fill="url(#paving)" />
        <path d="M385 42l80 126M375 42l65 126M505 42l80 126M440 102l80-30" fill="none" strokeWidth="3" />
        <path d="M390 50v30M402 70v30M414 85v34M426 105v32M438 120v34M450 138v28" strokeWidth="4" />
        <path d="M570 42q50 90 100 110l80 16h-60q-50-30-120-126z" fill="#a4a49f" />
        <path d="M640 42q40 30 150 28l12 40q-60 20-115 0z" fill="#5f8f44" />
        <path d="M640 42q40 40 148 32M684 70v42M710 76v44M735 80v42M760 78v44M785 74v40" fill="none" strokeWidth="4" />
        <path d="M775 42h90q2 40-15 70l-50-10z" fill="#6e8790" />
        <path d="M865 42h220l55 126H1020l-35-120h-40l-4 40-76 20z" fill="#333a3e" />
        <path d="M725 134L850 100V122L940 92V50L980 42V92L1025 168H690L730 158z" fill="#e9ecee" />
        <path d="M940 50l12 6v36M780 168l200-76M850 100v24M728 164l122-40M980 62l48 106M996 100l16 66" fill="none" strokeWidth="3" />
        <path d="M1085 42h365l48 126h-358z" fill="#878c8e" />
        <path d="M1165 42l54 126M1090 42l52 126M1450 42l48 126" fill="none" />
        <path d="M1450 42h98v126h-50z" fill="#dfe4e6" stroke="none" />
        <path d="M1546 42v126" />
      </g>
    </svg>
  );
}

/* ---------- dialog ---------- */

const boxClass =
  "size-[10px] shrink-0 appearance-none border border-[#bbb] bg-white checked:after:block checked:after:text-[9px] checked:after:font-bold checked:after:leading-[8px] checked:after:text-black checked:after:content-['✔']";

function LevelFilter() {
  return (
    <aside className="flex w-[112px] shrink-0 flex-col border border-[#3b3b3b]">
      <h3 className="h-6 bg-[#3b3b3b] px-[7px] text-[9px] leading-[24px] text-[#a8a8a8]">Filter by Level</h3>
      <ul className="flex h-[231px] flex-col">
        {levels.map((level) => (
          <li key={level} className="flex flex-1 items-center">
            <label className="flex items-center gap-1 whitespace-nowrap pl-[7px] text-[9px] leading-[12px] text-[#e0e0e0]">
              <input type="checkbox" defaultChecked className={boxClass} />
              {level}
            </label>
          </li>
        ))}
      </ul>
      <div className="mt-auto px-[5px] pb-[2px]">
        <div className="h-3 rounded-[3px] bg-[#4e4e4e]" />
        <div className="mt-1 flex gap-[3px] text-[9px] font-medium text-[#1089c2]">
          <button className="h-[18px] flex-1 rounded-lg border border-[#484848] bg-[#3b3b3b]">All</button>
          <button className="h-[18px] flex-1 rounded-lg border border-[#484848] bg-[#3b3b3b]">None</button>
        </div>
      </div>
    </aside>
  );
}

function WallTable() {
  const scroller = useRef<HTMLDivElement>(null);

  useEffect(() => {
    if (scroller.current) scroller.current.scrollTop = 12;
  }, []);

  return (
    <div className="flex min-w-0 flex-1 border border-[#3b3b3b]">
      <div ref={scroller} className="min-w-0 flex-1 overflow-hidden">
        <table className="mb-6 w-full table-fixed border-separate border-spacing-0 text-left text-[9px]">
          <thead className="sticky top-0 z-10 bg-[#3b3b3b] text-[#b4b4b4]">
            <tr className="h-[25px]">
              {columns.map((col) => (
                <th key={col.name} className={clsx("whitespace-nowrap py-0 pl-[7px] pr-0 font-medium", col.width)}>
                  {col.name}
                </th>
              ))}
            </tr>
          </thead>
          <tbody className="text-[#dcdcdc]">
            {walls.map(([type, top, topOffset, height, bounding], i) => {
              const cells = [type, "L1 - Block 35", "0'  0\"", top, topOffset, height, "0'  0\""];
              return (
                <tr key={i} className={i % 2 ? "bg-[#363636]" : "bg-[#313131]"}>
                  {cells.map((cell, c) => (
                    <td
                      key={c}
                      className="h-6 whitespace-pre border-b border-[#3d3d3d] py-0 pl-[7px] pr-0 leading-[16px]"
                    >
                      {cell}
                    </td>
                  ))}
                  <td className="border-b border-[#3d3d3d] p-0">
                    <input
                      type="checkbox"
                      aria-label="Room bounding"
                      defaultChecked={bounding}
                      className={clsx(boxClass, "mx-auto block")}
                    />
                  </td>
                  <td className="border-b border-[#3d3d3d] py-0 pl-[7px] pr-0">New Construction</td>
                  <td className="border-b border-[#3d3d3d] py-0 pl-[7px] pr-0">—</td>
                  <td className="border-b border-[#3d3d3d] py-0 pl-[7px] pr-0">Interior</td>
                  <td className="border-b border-[#3d3d3d] p-0" />
                </tr>
              );
            })}
          </tbody>
        </table>
      </div>
      <div className="w-[13px] shrink-0 pt-[74px]">
        <div className="h-[11px] w-3 rounded-[3px] bg-[#505050]" />
      </div>
    </div>
  );
}

function CheckWallsDialog() {
  const btn = "flex h-[22px] items-center rounded-lg border border-[#484848] bg-[#3d3d3d] text-[10px] font-medium";
  return (
    <div
      role="dialog"
      aria-label="Check Walls"
      className="absolute inset-x-[343px] bottom-[42px] top-[25px] rounded-md border-[5px] border-[#0579b4] bg-white p-[2px] shadow-[0_0_32px_2px_rgba(0,100,150,0.55)]"
    >
      <div className="flex h-full flex-col rounded-xs bg-[#323232] px-[10px]">
        <div className="-mx-1 flex h-[37px] shrink-0 items-center border-b border-[#0a6f9f] pl-[10px] pr-[10px] pt-[7px]">
          <h2 className="text-[10px] font-medium text-[#dedede]">B45 Labs — Check Walls</h2>
          <div className="ml-auto flex items-center gap-[13px] text-[#d0d0d0]">
            <button aria-label="Minimize" className="h-px w-[11px] bg-[#d0d0d0]" />
            <button aria-label="Maximize" className="size-[11px] border border-[#d0d0d0]" />
            <button aria-label="Close dialog">
              <svg viewBox="0 0 11 11" className="size-[11px]" stroke="currentColor" strokeWidth="1.200" aria-hidden="true">
                <path d="M0 0l11 11M11 0L0 11" />
              </svg>
            </button>
          </div>
        </div>
        <div className="mt-[5px] flex shrink-0 items-center gap-1">
          <button className={clsx(btn, "gap-[5px] px-[7px] text-[#a3a3a3]")}>
            <Svg className="size-2">
              <path d="M2 2h20v20H2zM9 2v20M16 2v20M2 9h20M2 15h20" stroke="#a3a3a3" strokeWidth="3" />
            </Svg>
            Isolate Walls
          </button>
          <button className={clsx(btn, "gap-[6px] px-2 text-[#118fcb]")}>
            <Svg className="size-2">
              <path d="M5 5c-6 7-2 15 7 15s13-8 7-15M5 5H1M5 5v5" stroke="#118fcb" strokeWidth="3" />
            </Svg>
            Refresh
          </button>
          <span className="ml-auto pr-[2px] text-[9px] text-[#6c6c6c]">1152 walls · 14 levels</span>
        </div>
        <p className="mt-[5px] h-[22px] shrink-0 bg-[#263a46] px-[9px] text-[9px] italic leading-[24px] text-[#5bb7dc]">
          1152 walls loaded. Click a row to select it in Revit. Wall collection cannot be interrupted — use Refresh after
          model edits.
        </p>
        <div className="mt-[5px] flex min-h-0 flex-1 gap-[3px]">
          <LevelFilter />
          <WallTable />
        </div>
        <div className="flex h-[50px] shrink-0 items-start justify-end gap-2 pr-[3px] pt-[10px] text-[10px] font-medium">
          <button className="h-7 w-[83px] rounded-lg border border-[#4a4a4a] bg-[#3d3d3d] text-[#e8e8e8]">Close</button>
          <button disabled className="h-7 w-[83px] rounded-lg bg-[#3d3d3d] text-[#666]">
            Apply
          </button>
        </div>
      </div>
    </div>
  );
}

/* ---------- bottom bars ---------- */

function ViewControls() {
  return (
    <div className="flex h-[14px] shrink-0 items-center bg-[#f0f0f0] pl-[11px] text-[9px] text-[#444]">
      <span className="w-[53px]">1/8" = 1'-0"</span>
      <div className="flex w-[267px] items-center justify-between">
        <Svg className="size-3">
          <path d="M1 3h22v18H1zM1 9h22M1 15h22M7 3l-6 8M14 3L3 21M21 3L10 21M23 12l-6 9" strokeWidth="1.500" />
        </Svg>
        <Box size={12} fill="#9fd0f5" className="text-[#2f8fd6]" />
        <Sun size={12} fill="#f5a623" className="text-[#f5a623]" />
        {["M4 20h12M12 3a7 7 0 100 14", "M4 6l8-3 8 5-4 9H8z", "M1 14h10V4h12M8 1v22", "M1 14h10V4h12M8 8v15"].map((d, i) => (
          <Svg key={d} className="size-3">
            <path d={d} strokeWidth="2" stroke={i > 1 ? "#2f7fc0" : "#555"} />
            {i === 2 ? (
              <path d="M14 14l8 8M22 14l-8 8" stroke="#e22" strokeWidth="3" />
            ) : (
              <circle cx="18" cy="17" r="5" fill="#3cb7c7" stroke="none" />
            )}
          </Svg>
        ))}
        <House size={12} className="text-[#4a8a90]" />
        <Glasses size={12} />
        <Lightbulb size={11} fill="#3cb7c7" className="text-[#3cb7c7]" />
        <Svg className="size-3">
          <path d="M2 3h14v8M2 3v14h8M14 14h8v8h-8z" strokeWidth="2" strokeDasharray="4 3" />
        </Svg>
        <Svg className="size-3">
          <path d="M3 8h14v14H3zM8 2h14v14M3 14h14M10 8v14" strokeWidth="2" stroke="#b04040" />
          <circle cx="19" cy="17" r="4" fill="#3cb7c7" stroke="none" />
        </Svg>
        <Layers size={12} className="text-[#3f7fb8]" />
        <Svg className="size-3">
          <path d="M2 2v16M22 2v10M2 7h20" strokeWidth="2" />
          <circle cx="18" cy="18" r="5" fill="#3cb7c7" stroke="none" />
        </Svg>
      </div>
      <ChevronLeft size={10} className="ml-1 text-[#888]" />
      <div className="ml-px flex h-full flex-1 items-center border-x border-[#ddd] bg-[#e8e8e8]">
        <span className="ml-[768px] h-[7px] w-3 rounded-[3px] bg-[#8c8c8c]" />
      </div>
      <ChevronRight size={10} className="mx-1 text-[#666]" />
      <Svg className="mr-1 size-2">
        <path d="M20 4v1M20 12v1M20 20v1M12 12v1M12 20v1M4 20v1" stroke="#888" strokeWidth="3" />
      </Svg>
    </div>
  );
}

function StatusBar() {
  return (
    <footer className="flex h-[19px] shrink-0 items-center border-b border-[#ddd] bg-[#f5f5f5] pl-[3px] pt-px text-[9px] text-[#444]">
      <span className="w-[1132px]">Planting : RPC Shrub : Lupin 3'-10"</span>
      <Svg className="size-3">
        <path d="M3 6l8-4 6 4v14H7l-4-3z" fill="#5aa7e0" stroke="#2f7fc0" />
        <path d="M9 9h8v12H9z" fill="#58b368" stroke="#2f8a45" />
        <path d="M16 2h5v8h-5z" fill="#f08a3c" stroke="none" />
      </Svg>
      <ChevronDown size={9} className="ml-[150px] text-[#aaa]" />
      <span className="ml-[9px] flex w-[36px] items-center text-[#aaa]">
        <UserRound size={12} />
        :0
      </span>
      <Svg className="size-3">
        <path d="M2 1h20v22H2zM2 6h20M10 11h9M10 15h9M10 19h9M5 11h2M5 15h2M5 19h2" strokeWidth="2" />
      </Svg>
      <Svg className="ml-2 size-3">
        <path d="M7 1h15v18H7zM11 6h8M11 10h8M11 14h8M1 18h6v5" stroke="#999" strokeWidth="2" />
      </Svg>
      <select aria-label="Design option" className="ml-[7px] w-[143px] appearance-none text-[9px] leading-[12px]">
        <option>Main Model</option>
      </select>
      <ChevronDown size={9} />
      <div className="ml-auto flex items-center gap-[6px] pr-[70px]">
        {["#e08a4a", "#2f8fd6", "#777", "#2f8fd6", "#555"].map((color, i) => (
          <span key={i} className="flex w-[13px]">
            <Svg className="size-[13px]">
              {i === 0 && <path d="M2 3h8v6H2zM12 3h9v6h-9M6 9v5" stroke={color} strokeWidth="2" />}
              {(i === 1 || i === 3) && <path d="M3 8l9-5v13l-9 5z" fill={color} stroke={color} />}
              {i === 2 && <path d="M5 3h9M7 3v8M13 3v8M4 11h11M9 11v8" stroke={color} strokeWidth="2" />}
              {i === 4 && <path d="M2 10h16M10 2v16M7 5l3-3 3 3M5 7l-3 3 3 3" strokeWidth="2" />}
              {(i === 1 || i === 3) && <path d="M15 1l7 7M22 1l-7 7" stroke="#e22" strokeWidth="3" />}
              <path d="M12 9v12l3-3 2 5 2-1-2-5h4z" fill="#fff" stroke="#333" strokeWidth="1.500" />
            </Svg>
          </span>
        ))}
        <Svg className="size-[13px]">
          <circle cx="12" cy="12" r="9" stroke="#aaa" strokeWidth="4" strokeDasharray="3 4" strokeLinecap="butt" />
        </Svg>
        <span className="flex items-center">
          <Filter size={13} />
          :0
        </span>
      </div>
    </footer>
  );
}

/* ---------- page ---------- */

export default function App() {
  const [accelerated, setAccelerated] = useState(false);

  return (
    <div className="flex h-screen flex-col overflow-hidden bg-[#f5f5f5] font-['Roboto','Open_Sans',sans-serif]">
      <div className="relative shrink-0 border-t border-[#8a8a8a]">
        <TitleBar />
        <Tabs />
        <Ribbon />
        <QuickAccess />
        {/* callout round Check Walls */}
        <div className="pointer-events-none absolute left-[165px] top-[34px] h-[64px] w-[54px] border-4 border-[#067bb5]" />
      </div>
      <div className="h-5 shrink-0 border-t border-white" />
      <div className="flex h-[17px] shrink-0 items-center justify-between bg-[#cbcbcb]">
        <div className="flex h-full w-[97px] items-center bg-white pl-1 pt-px text-[9px] font-medium text-[#333]">
          <House size={12} className="mr-[6px]" />
          {"{3D}"}
          <button aria-label="Close view" className="ml-auto mr-1 text-[10px]">
            ✕
          </button>
        </div>
        <Caret className="mr-1" />
      </div>
      <main className="relative flex min-h-0 flex-1 border-t border-white">
        <div className="relative min-w-0 flex-1 overflow-hidden">
          <Scene />
          <label className="absolute left-[26px] top-[15px] flex items-center gap-[3px] whitespace-nowrap text-[9px] leading-[10px] text-[#8c8c8c] text-shadow-[0_0_2px_#fff,0_0_2px_#fff]">
            <input
              type="checkbox"
              checked={accelerated}
              onChange={(e) => setAccelerated(e.target.checked)}
              className="h-[14px] w-[27px] appearance-none rounded-full bg-[#999] before:m-[2px] before:block before:size-[10px] before:rounded-full before:bg-white"
            />
            <span className="flex flex-col">
              <span>Accelerated Graphics</span>
              <em>Tech Preview</em>
            </span>
          </label>
        </div>
        <div className="flex w-[14px] shrink-0 flex-col items-center bg-[#ebebeb] text-[#888]">
          <ChevronUp size={11} />
          <span className="mt-[403px] h-[13px] w-[6px] rounded-[3px] bg-[#8c8c8c]" />
          <ChevronDown size={11} className="mt-auto" />
        </div>
        <CheckWallsDialog />
      </main>
      <ViewControls />
      <StatusBar />
    </div>
  );
}
